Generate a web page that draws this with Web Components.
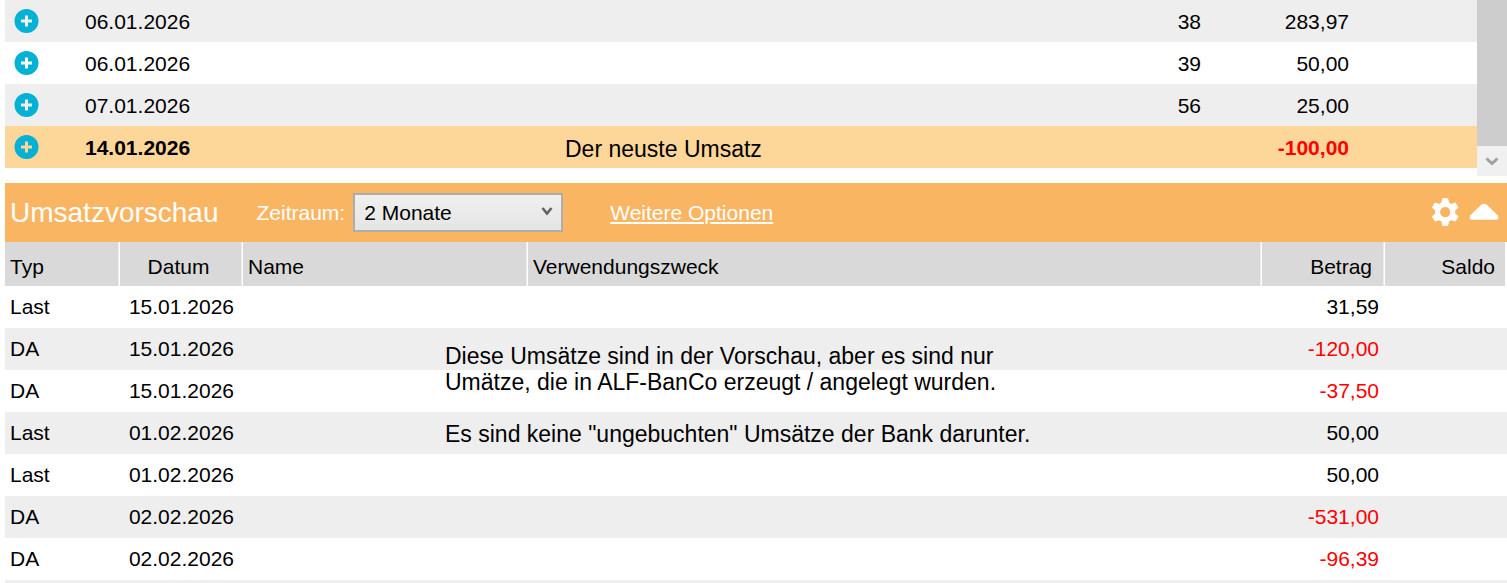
<!DOCTYPE html>
<html lang="de">
<head>
<meta charset="utf-8">
<meta name="viewport" content="width=device-width, initial-scale=1">
<title>Umsätze</title>
<style>
  html, body { height: 100%; margin: 0; }
  body {
    --stripe: #eeeeee;
    --selected: #fdd69a;
    --accent: #fab563;
    --negative: #ff0000;
    font: 21px/26px "Liberation Sans", Arial, sans-serif;
    color: #000;
    background: #fff;
  }
</style>
</head>
<body>

<account-view>
  <booking-list slot="bookings" rows='[
    {"date":"06.01.2026","no":"38","amount":"283,97"},
    {"date":"06.01.2026","no":"39","amount":"50,00"},
    {"date":"07.01.2026","no":"56","amount":"25,00"},
    {"date":"14.01.2026","text":"Der neuste Umsatz","amount":"-100,00","selected":true}
  ]'></booking-list>
  <scroll-track slot="scroll"></scroll-track>

  <preview-bar slot="preview">
    Umsatzvorschau
    <a slot="link" href="#optionen">Weitere Optionen</a>
  </preview-bar>
  <preview-table slot="preview" rows='[
    ["Last","15.01.2026","31,59"],
    ["DA","15.01.2026","-120,00"],
    ["DA","15.01.2026","-37,50"],
    ["Last","01.02.2026","50,00"],
    ["Last","01.02.2026","50,00"],
    ["DA","02.02.2026","-531,00"],
    ["DA","02.02.2026","-96,39"],
    ["","",""]
  ]'>
    <sheet-note>
      <p>Diese Umsätze sind in der Vorschau, aber es sind nur<br>Umätze, die in ALF-BanCo erzeugt / angelegt wurden.</p>
      <p>Es sind keine "ungebuchten" Umsätze der Bank darunter.</p>
    </sheet-note>
  </preview-table>
</account-view>

<script>
/* ── <account-view>: Buchungen oben, Vorschau darunter ───── */
class AccountView extends HTMLElement {
  connectedCallback() {
    this.attachShadow({ mode: 'open' }).innerHTML = `
      <style>
        :host {
          display: flex;
          flex-direction: column;
          gap: 7px;
          height: 100vh;
          box-sizing: border-box;
          padding-left: 5px;
          overflow: hidden;
        }
        .bookings { display: flex; }
        slot[name="bookings"]::slotted(*) { flex: 1; }
      </style>
      <section class="bookings">
        <slot name="bookings"></slot>
        <slot name="scroll"></slot>
      </section>
      <section><slot name="preview"></slot></section>
    `;
  }
}

/* ── <booking-list rows='[...]'> ─────────────────────────── */
class BookingList extends HTMLElement {
  connectedCallback() {
    this._rows = JSON.parse(this.getAttribute('rows') || '[]');
    this.attachShadow({ mode: 'open' });
    this._render();
  }

  _render() {
    const rows = this._rows.map(r => `
      <tr class="${r.selected ? 'selected' : ''}">
        <td class="icon">
          <button type="button" aria-label="Details anzeigen">
            <svg width="26" height="26" viewBox="0 0 26 26">
              <path fill="#03b1d5" fill-rule="evenodd" d="M12.500 1a12 12 0 1 0 0 24a12 12 0 1 0 0-24zM11 7.500h3v4h4v3h-4v4h-3v-4h-4v-3h4z"/>
            </svg>
          </button>
        </td>
        <td>${r.date}</td>
        <td class="text">${r.text || ''}</td>
        <td class="num">${r.no || ''}</td>
        <td class="num${r.amount.startsWith('-') ? ' negative' : ''}">${r.amount}</td>
        <td></td>
      </tr>`).join('');

    this.shadowRoot.innerHTML = `
      <style>
        :host { display: block; }
        table { width: 100%; border-collapse: collapse; table-layout: fixed; }
        tr { height: 42px; }
        tr:nth-child(odd) { background: var(--stripe); }
        tr.selected { background: var(--selected); font-weight: bold; }
        td { padding: 1px 0 0; white-space: nowrap; }
        .icon { padding: 0 0 0 9px; }
        .text { font-size: 23px; font-weight: normal; padding-top: 3px; }
        .num { text-align: right; }
        .negative { color: var(--negative); }
        button { display: block; padding: 0; border: 0; background: none; cursor: pointer; }
        svg { display: block; }
      </style>
      <table>
        <colgroup>
          <col style="width: 80px"><col style="width: 480px"><col>
          <col style="width: 100px"><col style="width: 148px"><col style="width: 128px">
        </colgroup>
        <tbody>${rows}</tbody>
      </table>
    `;
  }
}

/* ── <scroll-track> ──────────────────────────────────────── */
class ScrollTrack extends HTMLElement {
  connectedCallback() {
    this.attachShadow({ mode: 'open' }).innerHTML = `
      <style>
        :host { display: flex; flex-direction: column; flex: 0 0 30px; }
        .thumb { flex: 1; min-height: 146px; background: #cdcdcd; }
        button {
          display: flex;
          align-items: center;
          justify-content: center;
          height: 30px;
          padding: 0;
          border: 0;
          background: #f0f0f0;
        }
      </style>
      <div class="thumb"></div>
      <button type="button" aria-label="Nach unten">
        <svg width="14" height="10" viewBox="0 0 14 10" fill="none" stroke="#a0a0a0" stroke-width="3">
          <path d="M1.500 2.500L7 7.500L12.500 2.500"/>
        </svg>
      </button>
    `;
  }
}

/* ── <preview-bar>: Titel, Zeitraum und Optionen ─────────── */
class PreviewBar extends HTMLElement {
  connectedCallback() {
    this.attachShadow({ mode: 'open' }).innerHTML = `
      <style>
        :host {
          display: flex;
          align-items: center;
          height: 59px;
          padding: 0 8px 0 5px;
          box-sizing: border-box;
          background: var(--accent);
          color: #fff;
        }
        h2 { margin: 0 38px 0 0; font-size: 28px; font-weight: normal; line-height: 32px; }
        label { margin-right: 8px; }
        .select { position: relative; width: 210px; margin-right: 47px; }
        select {
          display: block;
          appearance: none;
          width: 100%;
          height: 39px;
          padding: 0 9px;
          border: 2px solid #adadad;
          border-radius: 0;
          background: linear-gradient(#f0f0f0, #e5e5e5);
          color: #000;
          font: inherit;
        }
        .select svg { position: absolute; right: 10px; top: 13px; pointer-events: none; }
        ::slotted(a) { color: inherit; text-underline-offset: 2px; text-decoration-thickness: 2px; }
        .tools { display: flex; align-items: center; gap: 9px; margin-left: auto; }
        button { padding: 0; border: 0; background: none; color: inherit; cursor: pointer; }
        button svg { display: block; }
      </style>
      <h2><slot></slot></h2>
      <label for="period">Zeitraum:</label>
      <div class="select">
        <select id="period">
          <option>1 Monat</option>
          <option selected>2 Monate</option>
          <option>3 Monate</option>
        </select>
        <svg width="12" height="10" viewBox="0 0 12 10" fill="none" stroke="#606060" stroke-width="2.500">
          <path d="M1.500 2L6 7.500L10.500 2"/>
        </svg>
      </div>
      <slot name="link"></slot>
      <div class="tools">
        <button type="button" aria-label="Einstellungen">
          <svg width="30" height="30" viewBox="0 0 30 30" fill="currentColor" stroke="currentColor" stroke-width="1" stroke-linejoin="round">
            <path fill-rule="evenodd" d="M12.700 .7h5l.9 4.200l2.700 1.500l4-1.400l2.700 4.600l-3.300 2.900v3.100l3.300 2.900l-2.700 4.600l-4-1.400l-2.700 1.500l-.9 4.200h-5l-.9-4.200l-2.700-1.500l-4 1.400l-2.700-4.600l3.300-2.900v-3.100l-3.300-2.900l2.700-4.600l4 1.400l2.700-1.500zM15.200 8.500a5.600 5.600 0 1 0 0 11.200a5.600 5.600 0 1 0 0-11.200z"/>
          </svg>
        </button>
        <button type="button" aria-label="Einklappen">
          <svg width="30" height="20" viewBox="0 0 30 20" fill="currentColor">
            <path d="M12.500 1.600Q15 0 17.500 1.600L28.800 12.500Q30.300 16.500 27.500 16.700H2.500Q-.3 16.500 1.200 12.500z"/>
          </svg>
        </button>
      </div>
    `;
  }
}

/* ── <preview-table rows='[[typ, datum, betrag],...]'> ───── */
class PreviewTable extends HTMLElement {
  connectedCallback() {
    this._rows = JSON.parse(this.getAttribute('rows') || '[]');
    this.attachShadow({ mode: 'open' });
    this._render();
  }

  _render() {
    const rows = this._rows.map(([type, date, amount]) => `
      <tr>
        <td>${type}</td>
        <td class="date">${date}</td>
        <td></td>
        <td></td>
        <td class="num${amount.startsWith('-') ? ' negative' : ''}">${amount}</td>
        <td></td>
      </tr>`).join('');

    this.shadowRoot.innerHTML = `
      <style>
        :host { display: block; position: relative; }
        table { width: 100%; border-spacing: 0; table-layout: fixed; }
        th {
          height: 44px;
          box-sizing: border-box;
          padding: 6px 5px 0;
          border-right: 1px solid #fff;
          background: #d9d9d9;
          box-shadow: inset -1px 0 #ececec;
          font-weight: normal;
          text-align: left;
        }
        th:last-child { border-right-width: 2px; box-shadow: none; }
        td { height: 42px; box-sizing: border-box; padding: 0 6px 0 5px; white-space: nowrap; }
        tbody tr:nth-child(even) { background: var(--stripe); }
        th.date { text-align: center; padding-right: 10px; }
        th.num { text-align: right; padding-right: 12px; }
        th.num:last-child { padding-right: 10px; }
        td.date { text-align: right; padding-right: 9px; }
        td.num { text-align: right; }
        .negative { color: var(--negative); }
      </style>
      <table>
        <colgroup>
          <col style="width: 115px"><col style="width: 123px"><col style="width: 285px">
          <col><col style="width: 123px"><col style="width: 122px">
        </colgroup>
        <thead>
          <tr>
            <th>Typ</th>
            <th class="date">Datum</th>
            <th>Name</th>
            <th>Verwendungszweck</th>
            <th class="num">Betrag</th>
            <th class="num">Saldo</th>
          </tr>
        </thead>
        <tbody>${rows}</tbody>
      </table>
      <slot></slot>
    `;
  }
}

/* ── <sheet-note>: Hinweis, liegt über der Tabelle ───────── */
class SheetNote extends HTMLElement {
  connectedCallback() {
    this.attachShadow({ mode: 'open' }).innerHTML = `
      <style>
        :host {
          display: block;
          position: absolute;
          left: 440px;
          top: 101px;
          font-size: 23px;
          line-height: 26px;
          white-space: nowrap;
        }
        ::slotted(p) { margin: 0 0 26px; }
      </style>
      <slot></slot>
    `;
  }
}

customElements.define('account-view', AccountView);
customElements.define('booking-list', BookingList);
customElements.define('scroll-track', ScrollTrack);
customElements.define('preview-bar', PreviewBar);
customElements.define('preview-table', PreviewTable);
customElements.define('sheet-note', SheetNote);
</script>
</body>
</html>
